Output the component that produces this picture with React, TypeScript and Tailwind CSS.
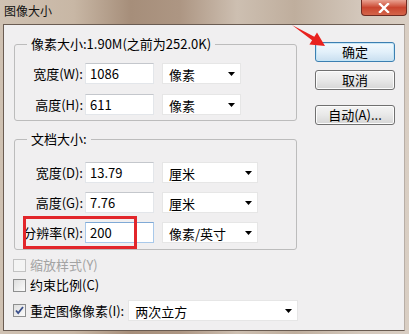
import React from 'react'

function TextBox({ value, focused }: { value: string; focused?: boolean }) {
  return (
    <div
      className={`w-[69px] h-[21px] bg-white border flex items-center pl-[4px] text-[13px] leading-[16px] text-black ${
        focused ? 'border-[#a9c9ea] border-t-[#7fa9d6]' : 'border-[#e3e6ea] border-t-[#c4c7cc]'
      }`}
    >
      {value}
    </div>
  )
}

function Arrow() {
  return (
    <svg width="7" height="4" viewBox="0 0 7 4" className="shrink-0">
      <path d="M0 0h7L3.5 4z" fill="#000" />
    </svg>
  )
}

function Combo({ value, className }: { value: string; className: string }) {
  return (
    <div
      className={`h-[21px] bg-white border border-[#e6e6e6] flex items-center pl-[6px] pr-[5px] text-[13px] leading-[16px] text-black shrink-0 ${className}`}
    >
      <span className="pt-[2px] whitespace-nowrap">{value}</span>
      <span className="ml-auto pt-[1px]">
        <Arrow />
      </span>
    </div>
  )
}

function Row({ label, value, unit, wide, focused }: { label: string; value: string; unit: string; wide?: boolean; focused?: boolean }) {
  return (
    <div className="flex items-center h-[21px]">
      <div className="w-[68px] text-right text-[13px] leading-[16px] whitespace-nowrap">{label}</div>
      <div className="ml-[2px]">
        <TextBox value={value} focused={focused} />
      </div>
      <Combo value={unit} className={wide ? 'ml-[8px] w-[96px]' : 'ml-[8px] w-[79px]'} />
    </div>
  )
}

function CheckBox({ checked, disabled }: { checked?: boolean; disabled?: boolean }) {
  return (
    <div
      className={`w-[13px] h-[13px] border flex items-center justify-center shrink-0 ${
        disabled ? 'border-[#c2c2c2] bg-[#f4f4f4]' : 'border-[#8e8f8f] bg-linear-to-br from-[#dedede] to-[#fbfbfb]'
      }`}
    >
      {checked && (
        <svg width="9" height="9" viewBox="0 0 9 9">
          <path d="M1 4.5l2.2 2.6L8 1" fill="none" stroke="#3a4f8a" strokeWidth="1.8" />
        </svg>
      )}
    </div>
  )
}

function WinButton({ label, primary }: { label: string; primary?: boolean }) {
  return (
    <div
      className={`w-[80px] h-[20px] rounded-[3px] border flex items-center justify-center text-[13px] leading-[16px] text-black ${
        primary
          ? 'border-[#3c7fb1] bg-linear-to-b from-[#f3f9fd] via-[#e2f0fa] to-[#c9dff0] shadow-[inset_0_0_0_1px_#c4e5f6]'
          : 'border-[#707070] bg-linear-to-b from-[#f4f4f4] via-[#e8e8e8] to-[#d6d6d6] shadow-[inset_0_0_0_1px_#fcfcfc]'
      }`}
    >
      {label}
    </div>
  )
}

export default function App() {
  return (
    <div className="relative w-[409px] h-[334px] overflow-hidden bg-[linear-gradient(90deg,#cfc1b2_0%,#c8b7a5_18%,#a68e7a_32%,#ad9683_44%,#cdbfb1_58%,#bfae9d_72%,#d3c7bb_88%,#d9cec3_100%)] font-['Noto_Sans_CJK_SC',sans-serif] text-black">
      {/* title bar */}
      <div className="h-[24px] flex items-start">
        <div className="pl-[4px] pt-[3px] text-[12px] leading-[16px] text-[#111]">图像大小</div>
        <div className="ml-auto mr-[2px] w-[46px] h-[16px] rounded-b-[4px] border border-t-0 border-[#6e2b22] bg-linear-to-b from-[#e8a191] via-[#c9452f] to-[#d4654a] flex items-center justify-center">
          <svg width="12" height="10" viewBox="0 0 12 10">
            <path d="M2 1l8 8M10 1L2 9" stroke="#fff" strokeWidth="2.4" strokeLinecap="square" />
          </svg>
        </div>
      </div>

      {/* client area */}
      <div className="ml-[3px] w-[402px] h-[307px] border border-[#6a5c52] border-r-[#b8aea6] bg-[#f0eff0] flex">
        {/* left column */}
        <div className="pl-[10px] pt-[10px] w-[293px] flex flex-col">
          <fieldset className="w-[283px] border border-[#bcbcbc] rounded-[3px]">
            <legend className="ml-[12px] px-[4px] text-[13px] leading-[18px]">像素大小:1.90M(之前为252.0K)</legend>
            <div className="pt-[10px] pb-[5px] flex flex-col gap-[10px]">
              <Row label="宽度(W):" value="1086" unit="像素" />
              <Row label="高度(H):" value="611" unit="像素" />
            </div>
          </fieldset>

          <fieldset className="mt-[9px] w-[283px] border border-[#bcbcbc] rounded-[3px]">
            <legend className="ml-[12px] px-[4px] text-[13px] leading-[18px]">文档大小:</legend>
            <div className="pt-[14px] pb-[6px] flex flex-col gap-[9px]">
              <Row label="宽度(D):" value="13.79" unit="厘米" wide />
              <Row label="高度(G):" value="7.76" unit="厘米" wide />
              <Row label="分辨率(R):" value="200" unit="像素/英寸" wide focused />
            </div>
          </fieldset>

          <div className="ml-[-1px] w-[285px] flex flex-col">
            <div className="mt-[5px] h-[20px] flex items-center gap-[4px]">
              <CheckBox disabled />
              <span className="text-[13px] leading-[16px] text-[#a3a3a3] whitespace-nowrap">缩放样式(Y)</span>
            </div>
            <div className="h-[20px] flex items-center gap-[4px]">
              <CheckBox />
              <span className="text-[13px] leading-[16px] whitespace-nowrap">约束比例(C)</span>
            </div>
            <div className="mt-[5px] h-[21px] flex items-center gap-[4px]">
              <CheckBox checked />
              <span className="text-[13px] leading-[16px] whitespace-nowrap">重定图像像素(I):</span>
              <Combo value="两次立方" className="ml-auto w-[170px]" />
            </div>
          </div>
        </div>

        {/* right column */}
        <div className="ml-[18px] pt-[17px] flex flex-col">
          <WinButton label="确定" primary />
          <div className="mt-[8px]">
            <WinButton label="取消" />
          </div>
          <div className="mt-[15px]">
            <WinButton label="自动(A)..." />
          </div>
        </div>
      </div>

      {/* red annotations */}
      <div className="absolute left-[23px] top-[216px] w-[114px] h-[33px] border-[3px] border-[#e2262b]" />
      <svg className="absolute left-[288px] top-[22px]" width="40" height="28" viewBox="0 0 40 28">
        <polygon points="4,3 26.3,14.8 29,10.6 37,24 21.4,22.4 24.1,18.2" fill="#e8221f" />
      </svg>
    </div>
  )
}
